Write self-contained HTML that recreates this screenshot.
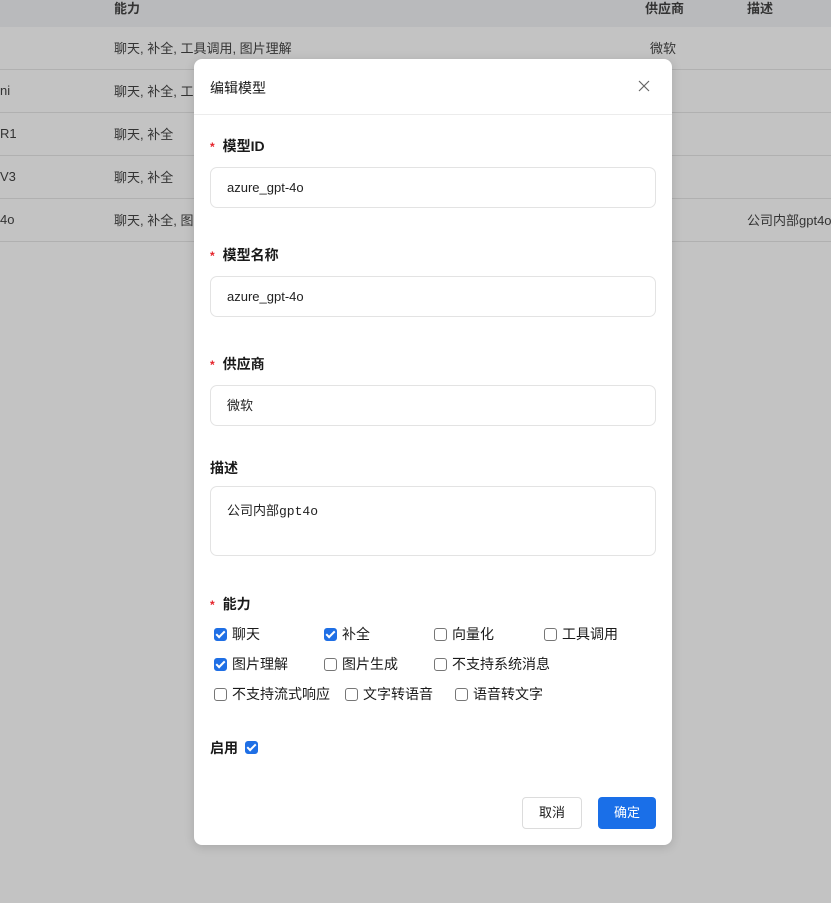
<!DOCTYPE html>
<html><head><meta charset="utf-8"><style>
*{box-sizing:border-box;margin:0;padding:0}
body{width:831px;height:903px;position:relative;overflow:hidden;background:#c3c3c3;font-family:"Liberation Sans","Noto Sans CJK SC",sans-serif;font-size:13px;color:#1f1f1f}
.a{position:absolute;white-space:nowrap}
.hdr{position:absolute;left:0;top:0;width:831px;height:27px;background:#b9babc}
.line{position:absolute;left:0;width:831px;height:1px;background:#b0b0b0}
.bt{color:#333}
.modal{position:absolute;left:194px;top:59px;width:478px;height:786px;background:#fff;border-radius:8px;box-shadow:0 2px 10px rgba(0,0,0,.15)}
.lab{position:absolute;font-weight:bold;font-size:14px;color:#1a1a1a}
.star{color:#e5242b;font-size:12px;margin-right:8px;font-weight:bold}
.inp{position:absolute;left:16px;width:446px;height:41px;border:1px solid #e3e3e3;border-radius:7px;padding-left:16px;line-height:39px;font-size:13px;color:#222}
.cb{position:absolute;width:13px;height:13px;border:1px solid #767676;border-radius:3px;background:#fff}
.cb.on{background:#1f6fe5;border-color:#1f6fe5}
.cb.on::after{content:"";box-sizing:content-box;position:absolute;left:3px;top:0px;width:3px;height:7px;border:solid #fff;border-width:0 2px 2px 0;transform:rotate(45deg)}
.ct{position:absolute;font-size:14px;color:#1a1a1a}
</style></head><body>
<div class="hdr"></div>
<div class="a bt" style="left:114px;top:-2px;font-weight:bold;color:#333">能力</div>
<div class="a bt" style="left:645px;top:-2px;font-weight:bold;color:#333">供应商</div>
<div class="a bt" style="left:747px;top:-2px;font-weight:bold;color:#333">描述</div>
<div class="line" style="top:69px"></div><div class="line" style="top:112px"></div><div class="line" style="top:155px"></div><div class="line" style="top:198px"></div><div class="line" style="top:241px"></div>
<div class="a bt" style="left:114px;top:38px">聊天, 补全, 工具调用, 图片理解</div>
<div class="a bt" style="left:650px;top:38px">微软</div>
<div class="a bt" style="left:0;top:83px">ni</div><div class="a bt" style="left:114px;top:81px">聊天, 补全, 工</div>
<div class="a bt" style="left:0;top:126px">R1</div><div class="a bt" style="left:114px;top:124px">聊天, 补全</div>
<div class="a bt" style="left:0;top:169px">V3</div><div class="a bt" style="left:114px;top:167px">聊天, 补全</div>
<div class="a bt" style="left:0;top:212px">4o</div><div class="a bt" style="left:114px;top:210px">聊天, 补全, 图</div>
<div class="a bt" style="left:747px;top:210px">公司内部gpt4o</div>

<div class="modal">
 <div class="a" style="left:16px;top:19px;font-size:14px;color:#1a1a1a">编辑模型</div>
 <svg class="a" style="left:444px;top:21px" width="12" height="12" viewBox="0 0 12 12"><path d="M1 1L11 11M11 1L1 11" stroke="#666" stroke-width="1.2"/></svg>
 <div class="a" style="left:0;top:55px;width:478px;height:1px;background:#ececec"></div>
 <div class="lab" style="left:16px;top:77px"><span class="star">*</span>模型ID</div>
 <div class="inp" style="top:108px">azure_gpt-4o</div>
 <div class="lab" style="left:16px;top:186px"><span class="star">*</span>模型名称</div>
 <div class="inp" style="top:217px">azure_gpt-4o</div>
 <div class="lab" style="left:16px;top:295px"><span class="star">*</span>供应商</div>
 <div class="inp" style="top:326px">微软</div>
 <div class="lab" style="left:16px;top:399px">描述</div>
 <div class="inp" style="top:427px;height:70px;line-height:normal;padding-top:13px;font-family:'Liberation Mono','Noto Sans CJK SC',monospace">公司内部gpt4o</div>
 <div class="lab" style="left:16px;top:535px"><span class="star">*</span>能力</div>

 <div class="cb on" style="left:20px;top:569px"></div><div class="ct" style="left:38px;top:565px">聊天</div>
 <div class="cb on" style="left:130px;top:569px"></div><div class="ct" style="left:148px;top:565px">补全</div>
 <div class="cb" style="left:240px;top:569px"></div><div class="ct" style="left:258px;top:565px">向量化</div>
 <div class="cb" style="left:350px;top:569px"></div><div class="ct" style="left:368px;top:565px">工具调用</div>
 <div class="cb on" style="left:20px;top:599px"></div><div class="ct" style="left:38px;top:595px">图片理解</div>
 <div class="cb" style="left:130px;top:599px"></div><div class="ct" style="left:148px;top:595px">图片生成</div>
 <div class="cb" style="left:240px;top:599px"></div><div class="ct" style="left:258px;top:595px">不支持系统消息</div>
 <div class="cb" style="left:20px;top:629px"></div><div class="ct" style="left:38px;top:625px">不支持流式响应</div>
 <div class="cb" style="left:151px;top:629px"></div><div class="ct" style="left:169px;top:625px">文字转语音</div>
 <div class="cb" style="left:261px;top:629px"></div><div class="ct" style="left:279px;top:625px">语音转文字</div>

 <div class="lab" style="left:16px;top:679px">启用</div>
 <div class="cb on" style="left:51px;top:682px"></div>

 <div class="a" style="left:328px;top:738px;width:60px;height:32px;border:1px solid #dcdcdc;border-radius:4px;text-align:center;line-height:30px;color:#1a1a1a">取消</div>
 <div class="a" style="left:404px;top:738px;width:58px;height:32px;background:#1a6fe8;border-radius:4px;text-align:center;line-height:32px;color:#fff">确定</div>
</div>
</body></html>
